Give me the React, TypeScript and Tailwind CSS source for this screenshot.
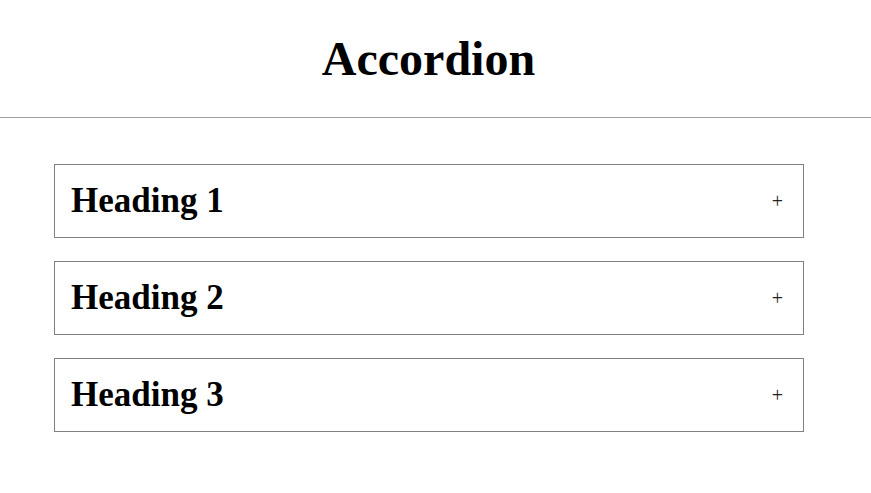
const items = ['Heading 1', 'Heading 2', 'Heading 3'];

export default function App() {
  return (
    <div className="min-h-screen bg-white text-black font-['Liberation_Serif',serif]">
      {/* Header */}
      <div className="border-b border-[#a0a0a0] pt-[32px] pb-[32px] pr-[14px]">
        <h1 className="text-center text-[48px] font-bold leading-[53px]">Accordion</h1>
      </div>

      {/* Accordion */}
      <div className="mt-[46px] ml-[54px] w-[750px] flex flex-col gap-[23px]">
        {items.map((title) => (
          <div
            key={title}
            className="border border-[#808080] pl-4 pr-[20px] py-4 flex items-center justify-between"
          >
            <h2 className="text-[35px] font-bold leading-[40px]">{title}</h2>
            <span className="text-[20px] leading-none text-[#222]">+</span>
          </div>
        ))}
      </div>
    </div>
  );
}
